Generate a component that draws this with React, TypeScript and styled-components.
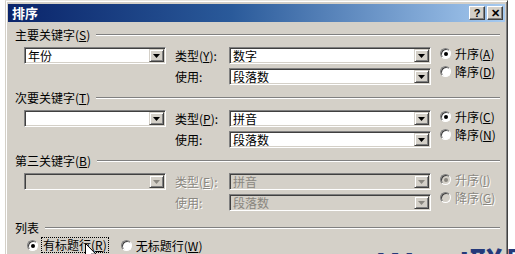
import React from "react";
import styled, { createGlobalStyle, css } from "styled-components";

const Global = createGlobalStyle`
  html, body { margin: 0; padding: 0; background: #fff; }
  body {
    font-family: "Noto Sans CJK SC", "Liberation Sans", sans-serif;
    font-size: 12px;
    color: #000;
  }
  #root { width: 515px; height: 254px; overflow: hidden; position: relative; }
`;

const Page = styled.div`
  position: relative;
  width: 515px;
  height: 254px;
  overflow: hidden;
  background: #fff;
`;

const Dialog = styled.div`
  margin-left: 5px;
  width: 503px;
  height: 280px;
  box-sizing: border-box;
  background: #d4d0c8;
  border-top: 1px solid #e8e6e0;
  border-left: 1px solid #d4d0c8;
  border-right: 1px solid #404040;
  box-shadow: inset 1px 1px #fff, inset -1px 0 #808080;
  padding: 3px 2px 0 2px;
`;

const TitleBar = styled.div`
  height: 18px;
  display: flex;
  align-items: center;
  padding: 0 2px 0 4px;
  background: linear-gradient(to right, #0a246a 0%, #2a5a9a 45%, #a6caf0 100%);
  color: #fff;
  font-weight: bold;
  font-size: 13px;
`;

const TitleText = styled.span`
  flex: 1;
  line-height: 18px;
`;

const CaptionButton = styled.div<{ $gap?: boolean }>`
  width: 16px;
  height: 14px;
  box-sizing: border-box;
  margin-left: ${(p) => (p.$gap ? "2px" : "0")};
  background: #d4d0c8;
  border: 1px solid;
  border-color: #fff #404040 #404040 #fff;
  box-shadow: inset -1px -1px #808080;
  display: flex;
  align-items: center;
  justify-content: center;
  color: #000;
  font-family: "Liberation Sans", sans-serif;
  font-weight: bold;
  font-size: 11px;
  line-height: 1;
`;

const Content = styled.div`
  padding: 6px 5px 0 7px;
`;

const GroupHeader = styled.div`
  display: flex;
  align-items: center;
  height: 14px;
  line-height: 14px;
  white-space: nowrap;
`;

const Rule = styled.div<{ $gap?: number }>`
  flex: 1;
  margin-left: ${(p) => p.$gap ?? 6}px;
  height: 0;
  border-top: 1px solid #808080;
  border-bottom: 1px solid #fff;
`;

const Section = styled.div<{ $last?: boolean }>`
  margin-bottom: ${(p) => (p.$last ? 10 : 6)}px;
`;

const SectionBody = styled.div`
  display: grid;
  grid-template-columns: 142px 45px 202px 1fr;
  grid-template-rows: 17px 17px;
  column-gap: 9px;
  row-gap: 4px;
  margin-top: 5px;
  padding-left: 9px;
`;

const Label = styled.div<{ $disabled?: boolean; $col: number; $row: number }>`
  grid-column: ${(p) => p.$col};
  grid-row: ${(p) => p.$row};
  display: flex;
  align-items: center;
  white-space: nowrap;
  ${(p) =>
    p.$disabled &&
    css`
      color: #8a8780;
      text-shadow: 1px 1px #fff;
    `}
`;

const Combo = styled.div<{ $disabled?: boolean; $col: number; $row: number }>`
  grid-column: ${(p) => p.$col};
  grid-row: ${(p) => p.$row};
  display: flex;
  align-items: center;
  height: 17px;
  box-sizing: border-box;
  background: ${(p) => (p.$disabled ? "#d4d0c8" : "#fff")};
  border: 1px solid;
  border-color: #808080 #fff #fff #808080;
  box-shadow: inset 1px 1px #404040, inset -1px -1px #d4d0c8;
  padding: 1px 1px 1px 3px;
  color: ${(p) => (p.$disabled ? "#8a8780" : "#000")};
`;

const ComboText = styled.span`
  flex: 1;
  line-height: 15px;
  white-space: nowrap;
`;

const ArrowButton = styled.div<{ $disabled?: boolean }>`
  width: 15px;
  height: 13px;
  box-sizing: border-box;
  background: #d4d0c8;
  border: 1px solid;
  border-color: #d4d0c8 #404040 #404040 #d4d0c8;
  box-shadow: inset 1px 1px #fff, inset -1px -1px #808080;
  display: flex;
  align-items: center;
  justify-content: center;
  color: ${(p) => (p.$disabled ? "#8a8780" : "#000")};
`;

const RadioColumn = styled.div`
  grid-column: 4;
  grid-row: 1 / span 2;
  display: flex;
  flex-direction: column;
  gap: 4px;
  margin-top: -1px;
`;

const RadioItem = styled.div<{ $disabled?: boolean }>`
  display: flex;
  align-items: center;
  height: 14px;
  gap: 4px;
  white-space: nowrap;
  ${(p) =>
    p.$disabled &&
    css`
      color: #8a8780;
      text-shadow: 1px 1px #fff;
    `}
`;

const RadioCircle = styled.span<{ $checked?: boolean; $disabled?: boolean }>`
  width: 11px;
  height: 11px;
  box-sizing: border-box;
  border-radius: 50%;
  background: ${(p) => (p.$disabled ? "#d4d0c8" : "#fff")};
  border: 1px solid;
  border-color: #808080 #fff #fff #808080;
  box-shadow: inset 1px 1px #404040;
  display: flex;
  align-items: center;
  justify-content: center;
  flex: none;
  &::after {
    content: "";
    display: ${(p) => (p.$checked ? "block" : "none")};
    width: 4px;
    height: 4px;
    border-radius: 50%;
    background: ${(p) => (p.$disabled ? "#8a8780" : "#000")};
    margin: 1px 0 0 1px;
  }
`;

const ListRow = styled.div`
  display: flex;
  align-items: center;
  height: 14px;
  margin-top: 3px;
  padding-left: 12px;
  gap: 13px;
`;

const FocusText = styled.span`
  outline: 1px dotted #000;
  outline-offset: 0;
  padding: 0 1px;
  line-height: 14px;
`;

const Watermark = styled.div`
  position: absolute;
  left: 378px;
  top: 249px;
  font-family: "Liberation Sans", "Noto Sans CJK SC", sans-serif;
  font-weight: bold;
  font-size: 36px;
  line-height: 36px;
  color: #24397a;
  white-space: nowrap;
  pointer-events: none;
`;

const Cursor = styled.svg`
  position: absolute;
  left: 85px;
  top: 243px;
`;

const Mn = ({ k }: { k: string }) => (
  <>
    (<u>{k}</u>)
  </>
);

const DropArrow = () => (
  <svg width="7" height="4" viewBox="0 0 7 4">
    <polygon points="0,0 7,0 3.5,4" fill="currentColor" />
  </svg>
);

type SectionData = {
  title: string;
  key: string;
  value: string;
  typeKey: string;
  type: string;
  use: string;
  asc: string;
  desc: string;
  disabled: boolean;
};

const sections: SectionData[] = [
  { title: "主要关键字", key: "S", value: "年份", typeKey: "Y", type: "数字", use: "段落数", asc: "A", desc: "D", disabled: false },
  { title: "次要关键字", key: "T", value: "", typeKey: "P", type: "拼音", use: "段落数", asc: "C", desc: "N", disabled: false },
  { title: "第三关键字", key: "B", value: "", typeKey: "E", type: "拼音", use: "段落数", asc: "I", desc: "G", disabled: true },
];

const ComboBox = ({
  value,
  disabled,
  col,
  row,
}: {
  value: string;
  disabled?: boolean;
  col: number;
  row: number;
}) => (
  <Combo $disabled={disabled} $col={col} $row={row}>
    <ComboText>{value}</ComboText>
    <ArrowButton $disabled={disabled}>
      <DropArrow />
    </ArrowButton>
  </Combo>
);

const SortSection = ({ s, last }: { s: SectionData; last?: boolean }) => (
  <Section $last={last}>
    <GroupHeader>
      <span>
        {s.title}
        <Mn k={s.key} />
      </span>
      <Rule />
    </GroupHeader>
    <SectionBody>
      <ComboBox value={s.value} disabled={s.disabled} col={1} row={1} />
      <Label $col={2} $row={1} $disabled={s.disabled}>
        类型<Mn k={s.typeKey} />:
      </Label>
      <ComboBox value={s.type} disabled={s.disabled} col={3} row={1} />
      <Label $col={2} $row={2} $disabled={s.disabled}>
        使用:
      </Label>
      <ComboBox value={s.use} disabled={s.disabled} col={3} row={2} />
      <RadioColumn>
        <RadioItem $disabled={s.disabled}>
          <RadioCircle $checked $disabled={s.disabled} />
          <span>
            升序<Mn k={s.asc} />
          </span>
        </RadioItem>
        <RadioItem $disabled={s.disabled}>
          <RadioCircle $disabled={s.disabled} />
          <span>
            降序<Mn k={s.desc} />
          </span>
        </RadioItem>
      </RadioColumn>
    </SectionBody>
  </Section>
);

export default function App() {
  return (
    <Page>
      <Global />
      <Dialog>
        <TitleBar>
          <TitleText>排序</TitleText>
          <CaptionButton>?</CaptionButton>
          <CaptionButton $gap>✕</CaptionButton>
        </TitleBar>
        <Content>
          {sections.map((s, i) => (
            <SortSection key={s.key} s={s} last={i === sections.length - 1} />
          ))}
          <GroupHeader>
            <span>列表</span>
            <Rule />
          </GroupHeader>
          <ListRow>
            <RadioItem>
              <RadioCircle $checked />
              <FocusText>
                有标题行<Mn k="R" />
              </FocusText>
            </RadioItem>
            <RadioItem>
              <RadioCircle />
              <span>
                无标题行<Mn k="W" />
              </span>
            </RadioItem>
          </ListRow>
        </Content>
      </Dialog>
      <Watermark>Word联盟</Watermark>
      <Cursor width="12" height="19" viewBox="0 0 12 19">
        <path d="M0.5 0.5 L0.5 15.5 L4 12 L6.5 18 L8.5 17 L6 11.2 L11 11.2 Z" fill="#fff" stroke="#000" strokeWidth="1" />
      </Cursor>
    </Page>
  );
}
